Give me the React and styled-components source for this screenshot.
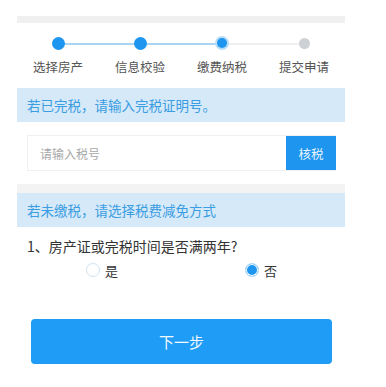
import React, { useState } from "react";
import styled, { createGlobalStyle } from "styled-components";

const Global = createGlobalStyle`
  html, body { margin: 0; padding: 0; background: #fff; }
  body { font-family: "Noto Sans CJK SC", "Noto Sans", sans-serif; }
  * { box-sizing: border-box; }
`;

const Page = styled.div`
  width: 328px;
  margin-left: 17px;
  padding-top: 16px;
`;

const TopBar = styled.div`
  height: 7px;
  background: #f0f0f0;
`;

const Steps = styled.div`
  position: relative;
  display: grid;
  grid-template-columns: repeat(4, 82px);
  height: 65px;
`;

const Line = styled.div`
  position: absolute;
  top: 20px;
  height: 2px;
  left: ${(p) => p.$from}px;
  width: ${(p) => p.$w}px;
  background: ${(p) => p.$c};
`;

const Step = styled.div`
  position: relative;
  z-index: 1;
  display: flex;
  flex-direction: column;
  align-items: center;
`;

const DotBox = styled.div`
  height: 40px;
  display: flex;
  align-items: center;
  justify-content: center;
`;

const Dot = styled.div`
  width: ${(p) => p.$size}px;
  height: ${(p) => p.$size}px;
  border-radius: 50%;
  background: ${(p) => p.$c};
  box-shadow: ${(p) => (p.$ring ? "0 0 0 2px #b9ddf7" : "none")};
`;

const StepLabel = styled.div`
  font-size: 12.5px;
  line-height: 12px;
  color: #555;
  margin-top: -2px;
`;

const SectionHeader = styled.div`
  height: 34px;
  background: #d5e9f8;
  color: #3b9de2;
  font-size: 13.5px;
  display: flex;
  align-items: center;
  padding-left: 10px;
`;

const InputRow = styled.div`
  display: flex;
  margin: 13px 9px 13px 10px;
  height: 36px;
  border: 1px solid #f0f0f0;
  border-right: none;
`;

const Input = styled.input`
  flex: 1;
  border: none;
  outline: none;
  font-family: inherit;
  font-size: 12px;
  padding-left: 12px;
  color: #333;
  background: #fff;
  &::placeholder { color: #a8a8a8; }
`;

const CheckBtn = styled.button`
  width: 50px;
  height: 34px;
  align-self: flex-end;
  border: none;
  background: #1e96f0;
  color: #e8f4fe;
  font-family: inherit;
  font-size: 12.5px;
  padding: 0;
`;

const Separator = styled.div`
  height: 9px;
  background: #f3f3f3;
`;

const Question = styled.div`
  font-size: 14px;
  color: #333;
  margin-top: 9px;
  padding-left: 10px;
  line-height: 20px;
`;

const RadioRow = styled.div`
  display: flex;
  height: 24px;
  align-items: center;
  margin-top: 2px;
`;

const RadioItem = styled.label`
  display: flex;
  align-items: center;
  gap: 5px;
  margin-left: ${(p) => p.$ml}px;
  font-size: 13px;
  color: #333;
`;

const Circle = styled.span`
  width: 14px;
  height: 14px;
  border-radius: 50%;
  border: 1px solid ${(p) => (p.$on ? "#b7dcf8" : "#cfe3f2")};
  background: ${(p) => (p.$on ? "#1e96f0" : "#fff")};
  box-shadow: ${(p) => (p.$on ? "inset 0 0 0 1px #fff" : "none")};
`;

const NextBtn = styled.button`
  display: block;
  margin: 37px 0 0 14px;
  width: 301px;
  height: 45px;
  border: none;
  border-radius: 4px;
  background: #1e9cf6;
  color: #f2f9ff;
  font-family: inherit;
  font-size: 15px;
`;

const steps = [
  { label: "选择房产", c: "#1e96f0", size: 13 },
  { label: "信息校验", c: "#1e96f0", size: 13 },
  { label: "缴费纳税", c: "#1e96f0", size: 10, ring: true },
  { label: "提交申请", c: "#cdd1d5", size: 11 },
];

export default function App() {
  const [val, setVal] = useState("no");
  return (
    <>
      <Global />
      <Page>
        <TopBar />
        <Steps>
          <Line $from={41} $w={164} $c="#a9d5f3" />
          <Line $from={205} $w={82} $c="#eef0f2" />
          {steps.map((s) => (
            <Step key={s.label}>
              <DotBox>
                <Dot $c={s.c} $size={s.size} $ring={s.ring} />
              </DotBox>
              <StepLabel>{s.label}</StepLabel>
            </Step>
          ))}
        </Steps>
        <SectionHeader>若已完税，请输入完税证明号。</SectionHeader>
        <InputRow>
          <Input placeholder="请输入税号" />
          <CheckBtn>核税</CheckBtn>
        </InputRow>
        <Separator />
        <SectionHeader>若未缴税，请选择税费减免方式</SectionHeader>
        <Question>1、房产证或完税时间是否满两年?</Question>
        <RadioRow>
          <RadioItem $ml={69} onClick={() => setVal("yes")}>
            <Circle $on={val === "yes"} />是
          </RadioItem>
          <RadioItem $ml={127} onClick={() => setVal("no")}>
            <Circle $on={val === "no"} />否
          </RadioItem>
        </RadioRow>
        <NextBtn>下一步</NextBtn>
      </Page>
    </>
  );
}
